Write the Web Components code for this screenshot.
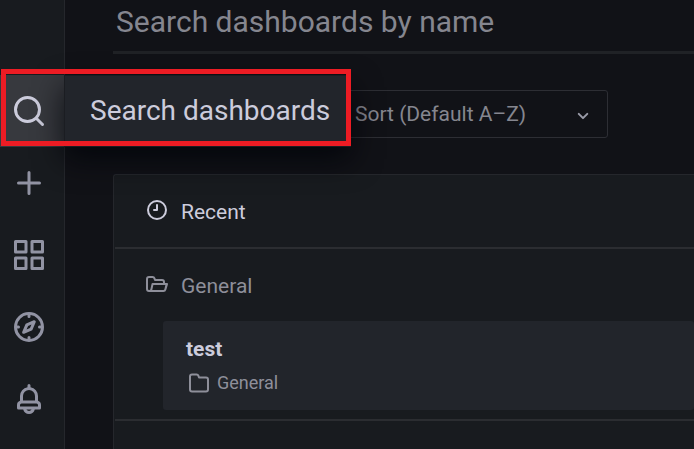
<!DOCTYPE html>
<html lang="en">
<head>
<meta charset="utf-8">
<title>Search dashboards</title>
<style>
  html, body { height: 100%; }
  body { margin: 0; overflow: hidden; background: #111217; color: #ccccdc; font-family: Roboto, "Liberation Sans", sans-serif; }
</style>
</head>
<body>
<dash-app></dash-app>
<script>
const ICONS = {
  search: '<g fill="none" stroke="currentColor" stroke-width="2" stroke-linecap="round"><circle cx="11" cy="11" r="8"/><path d="M17 17l4 4"/></g>',
  plus: '<path d="M19 11h-6V5a1 1 0 0 0-2 0v6H5a1 1 0 0 0 0 2h6v6a1 1 0 0 0 2 0v-6h6a1 1 0 0 0 0-2Z"/>',
  apps: '<path d="M10 13H3a1 1 0 0 0-1 1v7a1 1 0 0 0 1 1h7a1 1 0 0 0 1-1v-7a1 1 0 0 0-1-1Zm-1 7H4v-5h5ZM21 2h-7a1 1 0 0 0-1 1v7a1 1 0 0 0 1 1h7a1 1 0 0 0 1-1V3a1 1 0 0 0-1-1Zm-1 7h-5V4h5Zm1 4h-7a1 1 0 0 0-1 1v7a1 1 0 0 0 1 1h7a1 1 0 0 0 1-1v-7a1 1 0 0 0-1-1Zm-1 7h-5v-5h5ZM10 2H3a1 1 0 0 0-1 1v7a1 1 0 0 0 1 1h7a1 1 0 0 0 1-1V3a1 1 0 0 0-1-1ZM9 9H4V4h5Z"/>',
  compass: '<path d="M12 2a10 10 0 1 0 10 10A10 10 0 0 0 12 2Zm1 17.930V19a1 1 0 0 0-2 0v.93A8 8 0 0 1 4.070 13H5a1 1 0 0 0 0-2h-.93A8 8 0 0 1 11 4.070V5a1 1 0 0 0 2 0v-.93A8 8 0 0 1 19.930 11H19a1 1 0 0 0 0 2h.93A8 8 0 0 1 13 19.930ZM15.140 7.550l-5 2.120a1 1 0 0 0-.52.52l-2.120 5a1 1 0 0 0 .21 1.100 1 1 0 0 0 .7.290.93.93 0 0 0 .4-.08l5-2.120a1 1 0 0 0 .52-.52l2.120-5a1 1 0 0 0-1.310-1.310Zm-2.490 5.100-2.280 1 1-2.280 2.280-1Z"/>',
  bell: '<path d="M18 13.180V10a6 6 0 0 0-5-5.910V3a1 1 0 0 0-2 0v1.090A6 6 0 0 0 6 10v3.180A3 3 0 0 0 4 16v2a1 1 0 0 0 1 1h3.140a4 4 0 0 0 7.720 0H19a1 1 0 0 0 1-1v-2a3 3 0 0 0-2-2.820ZM8 10a4 4 0 0 1 8 0v3H8Zm4 10a2 2 0 0 1-1.720-1h3.440A2 2 0 0 1 12 20Zm6-3H6v-1a1 1 0 0 1 1-1h10a1 1 0 0 1 1 1Z"/>',
  clock: '<path d="M12 2a10 10 0 1 0 10 10A10 10 0 0 0 12 2Zm0 18a8 8 0 1 1 8-8 8 8 0 0 1-8 8Zm0-14a1 1 0 0 0-1 1v4H9a1 1 0 0 0 0 2h3a1 1 0 0 0 1-1V7a1 1 0 0 0-1-1Z"/>',
  open: '<path d="M22.780 11.370A1 1 0 0 0 22 11h-2v-1a3 3 0 0 0-3-3h-6.280l-.32-1A3 3 0 0 0 7.560 4H4a3 3 0 0 0-3 3v10a3 3 0 0 0 3 3h14.400a3 3 0 0 0 2.920-2.350L23 12.220a1 1 0 0 0-.22-.85ZM5.370 17.220a1 1 0 0 1-1 .78H4a1 1 0 0 1-1-1V7a1 1 0 0 1 1-1h3.560a1 1 0 0 1 .95.68l.54 1.640A1 1 0 0 0 10 9h7a1 1 0 0 1 1 1v1H7.560a1 1 0 0 0-1 .78Zm14 0a1 1 0 0 1-1 .78H7.210a1.420 1.420 0 0 0 .11-.35L8.360 13h12Z"/>',
  folder: '<path d="M19 5.500h-6.280l-.32-1a3 3 0 0 0-2.840-2H5a3 3 0 0 0-3 3v13a3 3 0 0 0 3 3h14a3 3 0 0 0 3-3v-10a3 3 0 0 0-3-3Zm1 13a1 1 0 0 1-1 1H5a1 1 0 0 1-1-1v-13a1 1 0 0 1 1-1h4.560a1 1 0 0 1 .95.68l.54 1.640a1 1 0 0 0 .95.68h7a1 1 0 0 1 1 1Z"/>',
  down: '<path d="M17 9.170a1 1 0 0 0-1.410 0L12 12.710 8.460 9.170a1 1 0 1 0-1.410 1.420l4.240 4.240a1 1 0 0 0 1.420 0L17 10.590a1 1 0 0 0 0-1.420Z"/>'
};

function define(name, html) {
  customElements.define(name, class extends HTMLElement {
    constructor() {
      super();
      const t = document.createElement('template');
      t.innerHTML = '<style>*{box-sizing:border-box}:host{box-sizing:border-box}</style>' + html;
      this.attachShadow({ mode: 'open' }).append(t.content.cloneNode(true));
    }
  });
}

customElements.define('ui-icon', class extends HTMLElement {
  connectedCallback() {
    if (this.shadowRoot) return;
    this.attachShadow({ mode: 'open' }).innerHTML =
      '<style>:host{display:block;flex:none;width:var(--icon-size,24px);height:var(--icon-size,24px)}svg{display:block;width:100%;height:100%;fill:currentColor}</style>' +
      '<svg viewBox="0 0 24 24" aria-hidden="true">' + ICONS[this.getAttribute('name')] + '</svg>';
  }
});

customElements.define('nav-item', class extends HTMLElement {
  connectedCallback() {
    if (this.shadowRoot) return;
    this.attachShadow({ mode: 'open' }).innerHTML = `
      <style>
        :host { display: block; position: relative; height: 72px; color: #9193a3; --icon-size: 36px; }
        :host([active]) { color: #ccccdc; background: #37393e; }
        a { display: flex; height: 100%; align-items: center; padding-left: 11px; color: inherit; }
      </style>
      <a href="#" aria-label="${this.getAttribute('label')}"><ui-icon name="${this.getAttribute('icon')}"></ui-icon></a>
      <slot></slot>`;
  }
});

define('nav-tooltip', `
  <style>
    :host { position: absolute; z-index: 2; left: 100%; top: 0; display: flex; align-items: center; height: 72px; padding: 0 20px 0 25px;
      border: 1px solid #1b1d22; background: #22252b; color: #ccccdc; font-size: 28px; line-height: 36px; white-space: nowrap;
      box-shadow: 0 12px 30px rgba(1,4,9,.8); }
  </style><slot></slot>`);

define('side-nav', `
  <style>
    :host { display: block; position: relative; z-index: 2; padding-top: 75px; background: #181b1f; border-right: 1px solid #25272c; }
    .mark { position: absolute; z-index: 3; left: 1px; top: 69px; width: 350px; height: 77px; border: 5px solid #ed1c24; pointer-events: none; }
  </style>
  <nav>
    <nav-item active icon="search" label="Search dashboards"><nav-tooltip>Search dashboards</nav-tooltip></nav-item>
    <nav-item icon="plus" label="Create"></nav-item>
    <nav-item icon="apps" label="Dashboards"></nav-item>
    <nav-item icon="compass" label="Explore"></nav-item>
    <nav-item icon="bell" label="Alerting"></nav-item>
  </nav>
  <div class="mark"></div>`);

define('search-field', `
  <style>
    :host { display: block; border-bottom: 3px solid #202226; }
    input { display: block; width: 100%; height: 51px; padding: 0 3px 8px; border: 0; outline: 0; background: none; color: #ccccdc; font: 30px/36px Roboto, sans-serif; }
    input::placeholder { color: #85868f; opacity: 1; }
  </style>
  <input type="text" placeholder="Search dashboards by name" aria-label="Search dashboards by name">`);

define('sort-select', `
  <style>
    :host { display: grid; align-items: center; width: 300px; color: #85868f; --icon-size: 24px; }
    select, ui-icon { grid-area: 1 / 1; }
    select { appearance: none; width: 100%; height: 48px; padding: 0 48px 0 46px; border: 1px solid #2d2e34; border-radius: 3px; background: #111217; color: inherit; font: 21px/30px Roboto, sans-serif; }
    ui-icon { justify-self: end; margin: 3px 13px 0 0; color: #9a9ba8; pointer-events: none; }
  </style>
  <select aria-label="Sort"><option>Sort (Default A–Z)</option></select>
  <ui-icon name="down"></ui-icon>`);

define('folder-section', `
  <style>
    :host { display: block; border-bottom: 2px solid #2b2d31; }
    button { display: flex; align-items: center; gap: 12px; width: 100%; height: 72px; padding: 1px 30px 0; border: 0; background: none; color: inherit; font: 21px/30px Roboto, sans-serif; text-align: left; --icon-size: 24px; }
    slot[name=icon]::slotted(*) { margin-bottom: 4px; }
  </style>
  <button type="button"><slot name="icon"></slot><slot name="title"></slot></button>
  <slot></slot>`);

define('dashboard-card', `
  <style>
    :host { display: block; margin: 0 0 9px 48px; padding: 12px 23px 11px; height: 89px; border-radius: 3px; background: #22252b; color: #ccccdc; }
    a { display: block; color: inherit; text-decoration: none; font-size: 21px; font-weight: 700; line-height: 32px; }
    .folder { display: flex; align-items: center; gap: 6px; color: #8e8f9a; font-size: 18px; line-height: 24px; padding: 6px 0 0 1px; --icon-size: 24px; }
  </style>
  <a href="#"><slot></slot></a>
  <div class="folder"><ui-icon name="folder"></ui-icon><slot name="folder"></slot></div>`);

define('result-list', `
  <style>
    :host { display: block; flex: 1; padding-left: 1px; border: 1px solid #25272c; border-width: 1px 0 0 1px; border-radius: 3px 0 0 0; background: #181b1f; }
  </style><slot></slot>`);

define('dash-app', `
  <style>
    :host { display: grid; grid-template-columns: 65px minmax(0, 1fr); height: 100vh; }
    main { display: flex; flex-direction: column; padding-left: 48px; min-height: 0; }
    .tools { display: flex; padding: 36px 0; }
    sort-select { margin-left: 195px; }
    .muted { color: #8e8f9a; }
  </style>
  <side-nav></side-nav>
  <main>
    <search-field></search-field>
    <div class="tools"><sort-select></sort-select></div>
    <result-list>
      <folder-section><ui-icon slot="icon" name="clock"></ui-icon><span slot="title">Recent</span></folder-section>
      <folder-section class="muted"><ui-icon slot="icon" name="open"></ui-icon><span slot="title">General</span>
        <dashboard-card>test<span slot="folder">General</span></dashboard-card>
      </folder-section>
    </result-list>
  </main>`);
</script>
</body>
</html>
